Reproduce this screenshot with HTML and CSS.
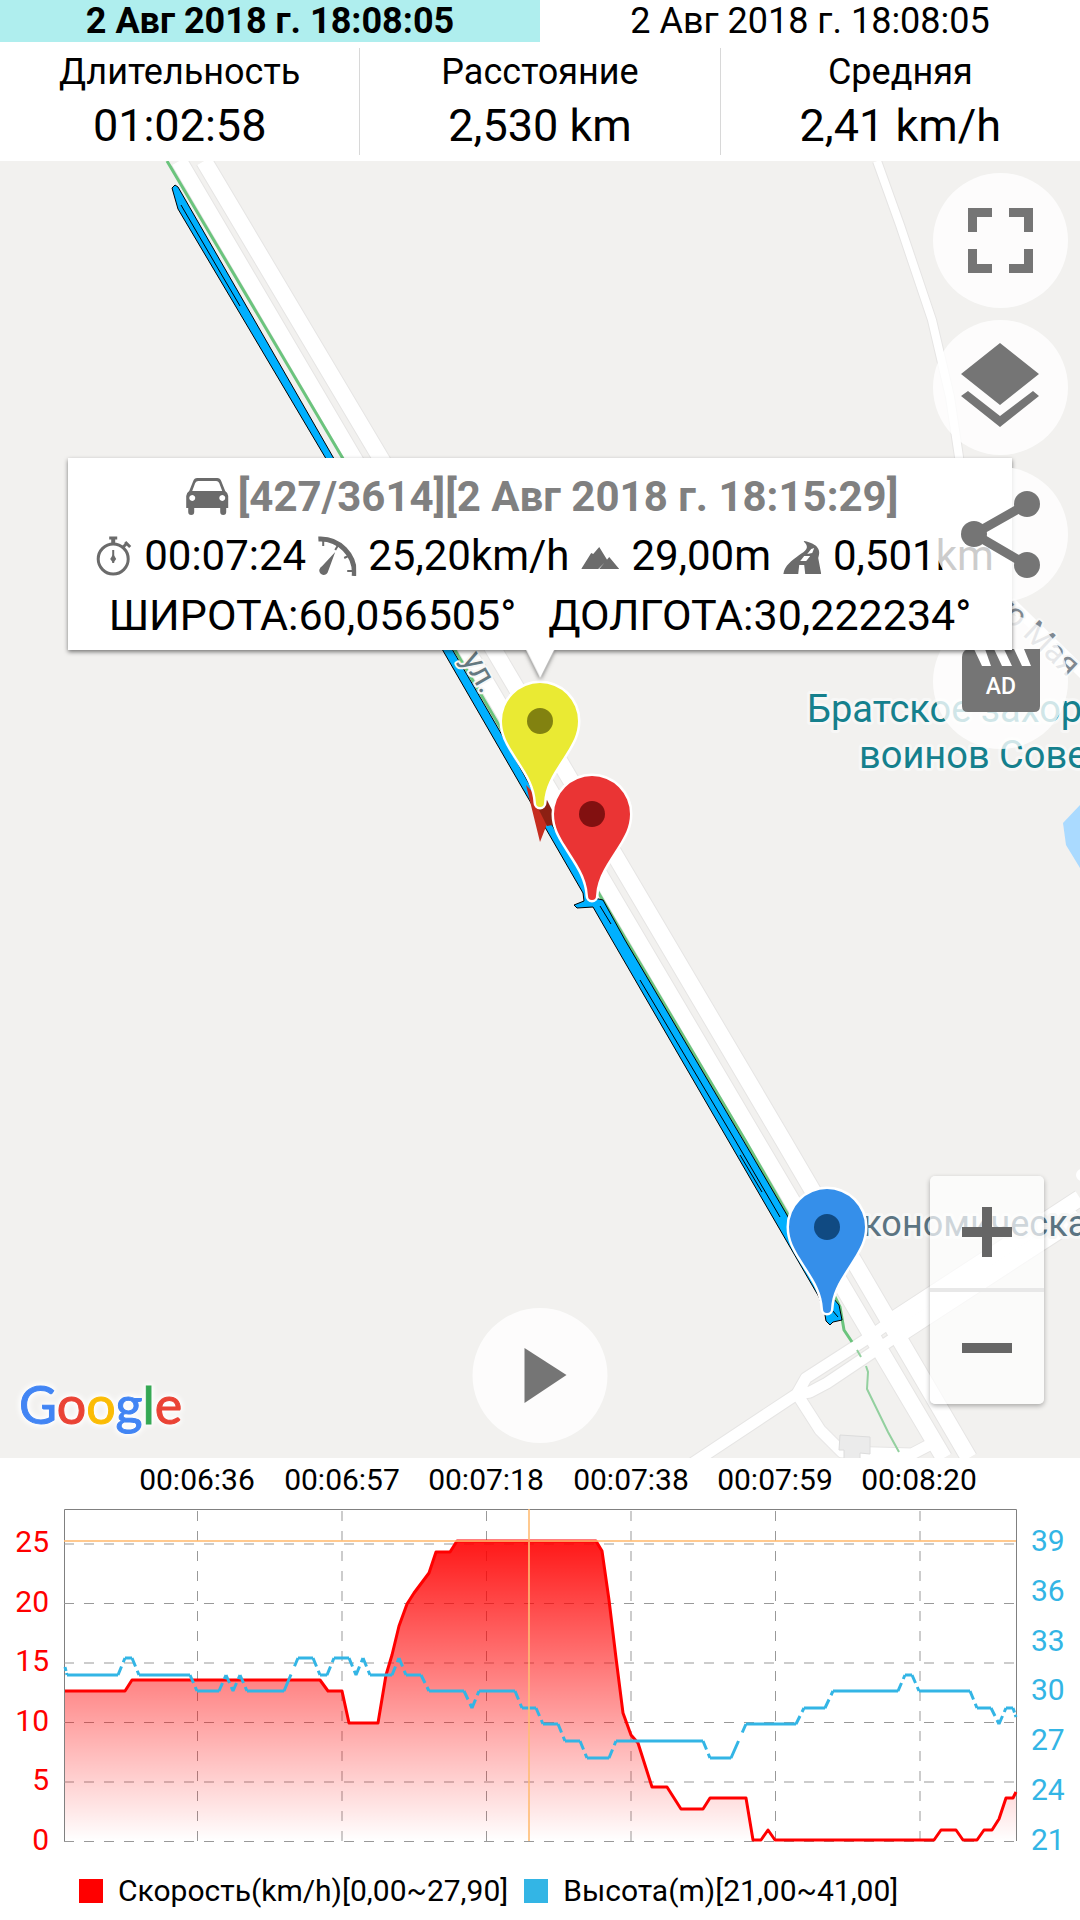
FILE: index.html
```html
<!DOCTYPE html>
<html lang="ru">
<head>
  <meta charset="UTF-8">
  <meta name="viewport" content="width=device-width, initial-scale=1.0">
  <title>Трек</title>
  <link rel="stylesheet" href="styles.css">
</head>
<body>

  <nav class="tabs">
    <button type="button" class="tab active">2 Авг 2018 г. 18:08:05</button>
    <button type="button" class="tab">2 Авг 2018 г. 18:08:05</button>
  </nav>

  <section class="stats">
    <div class="stat">
      <div class="stat-label">Длительность</div>
      <div class="stat-value">01:02:58</div>
    </div>
    <div class="stat">
      <div class="stat-label">Расстояние</div>
      <div class="stat-value">2,530 km</div>
    </div>
    <div class="stat">
      <div class="stat-label">Средняя</div>
      <div class="stat-value">2,41 km/h</div>
    </div>
  </section>

  <main class="map">
    <svg class="map-canvas" viewBox="0 161 1080 1297">
      <defs>
        <path id="pin" d="M0-38a38 38 0 0 1 38 38C38 13 32 23 27 31C16 49 5 62 4 82a4 4 0 0 1-8 0C-5 62-16 49-27 31C-32 23-38 13-38 0a38 38 0 0 1 38-38z"/>
      </defs>

      <!-- roads: grey casing first, then white on top -->
      <g class="road casing">
        <path class="wide" d="M179 161L353 457L756 1140L944 1458"/>
        <path class="wide" d="M204 161L380 457L783 1140L969 1458"/>
        <path class="wide" d="M1080 1198L893 1320"/>
        <path class="wide" d="M1080 1217L903 1332"/>
        <path d="M893 1320L865 1340L806 1378L797 1394L690 1465"/>
        <path d="M903 1332L827 1383L810 1392L797 1394L820 1430L842 1452L912 1454L935 1442"/>
        <path class="thin" d="M877 161L900 225L932 320L950 397L959 457L975 560L1010 602L1090 680"/>
      </g>
      <g class="road">
        <path class="wide" d="M179 161L353 457L756 1140L944 1458"/>
        <path class="wide" d="M204 161L380 457L783 1140L969 1458"/>
        <path class="wide" d="M1080 1198L893 1320"/>
        <path class="wide" d="M1080 1217L903 1332"/>
        <path d="M893 1320L865 1340L806 1378L797 1394L690 1465"/>
        <path d="M903 1332L827 1383L810 1392L797 1394L820 1430L842 1452L912 1454L935 1442"/>
        <path class="thin" d="M877 161L900 225L932 320L950 397L959 457L975 560L1010 602L1090 680"/>
      </g>
      <path class="road" d="M1010 602L1090 680"/>
      <circle cx="1082" cy="1175" r="6" fill="#fff"/>
      <path class="building" d="M840 1435l30 2v17l-10-1v8h-16v-11h-5z"/>
      <path class="water" d="M1063 823L1080 805V868L1066 845z"/>

      <path class="walkway" d="M167 161L342 457L500 727L598 892L625 938L745 1140L787 1213L835 1297L840 1307L844 1330L852 1342"/>
      <path class="walkway light" d="M857 1350L861 1357M866 1366L868 1372L867 1389L888 1432L899 1452"/>

      <path class="track" d="M172 188L175 185L178 187L333 457L452 649L502 735L552 825L585 880L590 897L603 900L625 940L743 1140L787 1215L833 1298L839 1305L842 1320L833 1322L830 1325L826 1321L825 1315L819 1297L728 1140L612 940L593 907L577 908L574 905L584 901L583 893L442 649L325 457L178 209z"/>
      <path class="track-inner" d="M181 205L220 272L240 306M600 906L611 924M640 980L735 1140L780 1217M740 1155L762 1192M832 1310L838 1317"/>

      <g class="map-text">
        <text class="street" transform="translate(482 695) rotate(60)" text-anchor="end">ул.</text>
        <text class="street far" transform="translate(993 608) rotate(43)">го Мая</text>
        <text class="poi" x="807" y="722">Братское захоронение</text>
        <text class="poi" x="859" y="768">воинов Советской</text>
        <text class="district" x="838" y="1236">Экономическая</text>
      </g>

      <path fill="#c62d1f" d="M526 785L540 842L547 824L557 822L548 808z"/>
      <path fill="#8c2013" d="M536 804L547 800L553 812V825L547 826z"/>

      <g transform="translate(540 721)">
        <use href="#pin" class="pin" fill="#eaea33"/>
        <circle r="13" fill="#828210"/>
      </g>
      <g transform="translate(592 814)">
        <use href="#pin" class="pin" fill="#ea3434"/>
        <circle r="13" fill="#821010"/>
      </g>
      <g transform="translate(827 1227)">
        <use href="#pin" class="pin" fill="#358fea"/>
        <circle r="13" fill="#104a82"/>
      </g>
    </svg>

    <div class="popup">
      <div class="popup-row popup-title">
        <svg width="44" height="40" viewBox="0 0 44 40"><path fill="#6b6b6b" fill-rule="evenodd" d="M12 1h20q3 0 4 3l4 10q3 2 3 5v12h-2v4q0 3-3 3t-3-3v-4H9v4q0 3-3 3t-3-3v-4H1V19q0-3 3-5l4-10q1-3 4-3zM13 4q-2 0-3 2L7 14h30l-3-8q-1-2-3-2zM7 18a3 3 0 1 0 .1 0zM37 18a3 3 0 1 0 .1 0z"/></svg>
        <span>[427/3614][2 Авг 2018 г. 18:15:29]</span>
      </div>
      <div class="popup-row popup-metrics">
        <svg width="38" height="40" viewBox="0 0 38 40"><g fill="none" stroke="#6b6b6b"><circle cx="19" cy="23" r="15" stroke-width="3"/><path d="M19 2v6" stroke-width="4"/><path d="M15 2h8" stroke-width="3"/><path d="M29 11l4-4" stroke-width="3"/><path d="M31 6l5 5" stroke-width="3"/><path d="M19 14v13" stroke-width="2"/></g><path fill="#6b6b6b" d="M19 18l3 5-3 4-3-4z"/></svg>
        <span>00:07:24</span>
        <svg width="38" height="40" viewBox="0 0 38 40"><path d="M0 3A34 34 0 0 1 36 40" fill="none" stroke="#6b6b6b" stroke-width="5"/><path d="M5 5v5M20 9l-3 5M32 19l-6 3M37 35h-8" stroke="#6b6b6b" stroke-width="2"/><path fill="#6b6b6b" d="M17 16L10 35q-1 4-5 4-4-1-4-5 1-3 3-4z"/></svg>
        <span>25,20km/h</span>
        <svg width="38" height="40" viewBox="0 0 38 40"><path fill="#6b6b6b" d="M0 33L10 17l2 1 6-7 8 13-9 9zM18 33l10-12 10 12z"/></svg>
        <span>29,00m</span>
        <svg width="38" height="40" viewBox="0 0 38 40"><path fill="#6b6b6b" fill-rule="evenodd" d="M0 38C2 29 8 25 16 19C22 15 27 12 21 6q-1-1 0-1c14 3 17 9 14 17l3 16zM16 29l-1 9h7l-1-9zM21 20l-4 5h6l4-5zM28 13l-4 5 5-1 2-5z"/></svg>
        <span>0,501km</span>
      </div>
      <div class="popup-row popup-coords">
        <span>ШИРОТА:60,056505°</span>
        <span>ДОЛГОТА:30,222234°</span>
      </div>
    </div>

    <div class="side-buttons">
      <button type="button" class="round-btn" aria-label="Во весь экран">
        <svg viewBox="0 0 135 135"><path d="M35 35h24v9H44v15h-9zM76 35h24v24h-9V44H76zM35 76h9v15h15v9H35zM91 76h9v24H76v-9h15z"/></svg>
      </button>
      <button type="button" class="round-btn" aria-label="Слои">
        <svg viewBox="0 0 135 135"><path d="M67 23L106 54L67 85L28 54zM35 71L67 96L100 71L106 76L67 107L28 76z"/></svg>
      </button>
      <button type="button" class="round-btn" aria-label="Поделиться">
        <svg viewBox="0 0 135 135"><path d="M94 37L41 67L94 98" fill="none" stroke="#757575" stroke-width="9"/><circle cx="94" cy="37" r="13"/><circle cx="41" cy="67" r="13"/><circle cx="94" cy="98" r="13"/></svg>
      </button>
      <button type="button" class="round-btn behind" aria-label="Реклама">
        <svg viewBox="0 0 135 135"><path d="M37 35H107V92q0 6-6 6H35q-6 0-6-6V43q0-6 6-8z"/><path class="slats" d="M41 35h11l6 17h-9zM61 35h10l8 17h-10zM81 35h10l7 17h-9z"/><text x="68" y="80" text-anchor="middle">AD</text></svg>
      </button>
    </div>

    <div class="zoom">
      <button type="button" aria-label="Увеличить"><svg width="50" height="50" viewBox="0 0 50 50"><path d="M20 0h10v20h20v10H30v20H20V30H0V20h20z"/></svg></button>
      <button type="button" aria-label="Уменьшить"><svg width="50" height="50" viewBox="0 0 50 50"><path d="M0 20h50v10H0z"/></svg></button>
    </div>

    <button type="button" class="round-btn play" aria-label="Воспроизвести">
      <svg viewBox="0 0 135 135"><path d="M52 40L94 67L52 95z"/></svg>
    </button>

    <a class="google" href="#" aria-label="Google"><span class="b">G</span><span class="r">o</span><span class="y">o</span><span class="b">g</span><span class="g">l</span><span class="r">e</span></a>
  </main>

  <section class="chart">
    <svg class="chart-canvas" viewBox="0 1458 1080 404">
      <defs>
        <linearGradient id="speedFill" gradientUnits="userSpaceOnUse" x1="0" y1="1510" x2="0" y2="1841">
          <stop offset="0" stop-color="#f00"/>
          <stop offset="1" stop-color="#f00" stop-opacity="0"/>
        </linearGradient>
      </defs>

      <path class="frame" d="M64.5 1841V1509.5H1016.5V1841"/>
      <g id="grid" class="grid"></g>
      <path id="speed-area" fill="url(#speedFill)"/>
      <path id="speed-line" class="speed"/>
      <path id="alt-line" class="altitude"/>
      <path class="cursor" d="M64 1541H1016M529 1509V1841"/>

      <g class="axis time">
        <text x="197" y="1490">00:06:36</text>
        <text x="342" y="1490">00:06:57</text>
        <text x="486" y="1490">00:07:18</text>
        <text x="631" y="1490">00:07:38</text>
        <text x="775" y="1490">00:07:59</text>
        <text x="919" y="1490">00:08:20</text>
      </g>
      <g class="axis left">
        <text x="49" y="1552">25</text>
        <text x="49" y="1612">20</text>
        <text x="49" y="1671">15</text>
        <text x="49" y="1731">10</text>
        <text x="49" y="1790">5</text>
        <text x="49" y="1850">0</text>
      </g>
      <g class="axis right">
        <text x="1031" y="1551">39</text>
        <text x="1031" y="1601">36</text>
        <text x="1031" y="1651">33</text>
        <text x="1031" y="1700">30</text>
        <text x="1031" y="1750">27</text>
        <text x="1031" y="1800">24</text>
        <text x="1031" y="1850">21</text>
      </g>
    </svg>
    <div class="legend">
      <span class="legend-item"><i class="swatch red"></i>Скорость(km/h)[0,00~27,90]</span>
      <span class="legend-item"><i class="swatch blue"></i>Высота(m)[21,00~41,00]</span>
    </div>
  </section>

  <script>
    const speed = [
      [65,1691],[125,1691],[132,1680],[320,1680],[328,1691],[342,1691],[349,1723],[378,1723],
      [386,1675],[392,1655],[399,1626],[407,1604],[414,1593],[429,1573],[436,1552],[450,1552],
      [457,1541],[596,1541],[602,1551],[609,1600],[616,1658],[623,1713],[631,1735],[638,1743],
      [652,1787],[667,1787],[681,1809],[703,1809],[710,1798],[746,1798],[753,1840],[761,1840],
      [768,1830],[775,1840],[934,1840],[941,1830],[956,1830],[963,1840],[977,1840],[984,1830],
      [992,1830],[999,1819],[1006,1798],[1013,1798],[1016,1792]
    ];
    const altitude = [
      [65,1667],[67,1675],[118,1675],[125,1658],[132,1658],[139,1675],[190,1675],[197,1691],
      [219,1691],[226,1675],[233,1691],[240,1675],[247,1691],[284,1691],[298,1658],[313,1658],
      [320,1675],[327,1675],[334,1658],[349,1658],[356,1675],[363,1658],[370,1675],[392,1675],
      [399,1658],[406,1675],[421,1675],[429,1691],[464,1691],[472,1708],[479,1691],[515,1691],
      [522,1708],[536,1708],[543,1724],[558,1724],[565,1741],[580,1741],[587,1758],[609,1758],
      [616,1741],[703,1741],[710,1758],[731,1758],[746,1724],[796,1724],[804,1708],[825,1708],
      [833,1691],[898,1691],[905,1675],[912,1675],[919,1691],[970,1691],[977,1708],[991,1708],
      [999,1724],[1006,1708],[1013,1708],[1016,1717]
    ];

    const line = 'M' + speed.map(p => p.join(' ')).join('L');
    document.getElementById('speed-line').setAttribute('d', line);
    document.getElementById('speed-area').setAttribute('d', line + 'V1841H65z');

    // flat parts are solid, slopes are split in two dashes
    let alt = '';
    for (let i = 1; i < altitude.length; i++) {
      const [x1, y1] = altitude[i - 1];
      const [x2, y2] = altitude[i];
      if (y1 === y2) {
        alt += `M${x1} ${y1}H${x2}`;
      } else {
        const at = t => `${x1 + (x2 - x1) * t} ${y1 + (y2 - y1) * t}`;
        alt += `M${at(0)}L${at(0.5)}M${at(0.75)}L${at(1)}`;
      }
    }
    document.getElementById('alt-line').setAttribute('d', alt);

    const grid = document.getElementById('grid');
    const addLine = d => {
      const path = document.createElementNS('http://www.w3.org/2000/svg', 'path');
      path.setAttribute('d', d);
      grid.appendChild(path);
    };
    [197.5, 342, 486.5, 631, 775.5, 920].forEach(x => addLine(`M${x} 1841V1510`));
    [1544, 1603.5, 1663, 1722.5, 1782, 1841.5].forEach(y => addLine(`M64 ${y}H1016`));
  </script>

</body>
</html>
```

FILE: styles.css
```css
* {
  box-sizing: border-box;
}

body {
  margin: 0;
  background: #fff;
  color: #000;
  font-family: Roboto, sans-serif;
}

button {
  margin: 0;
  padding: 0;
  border: none;
  background: none;
  font-family: inherit;
  color: inherit;
  cursor: pointer;
}

/* header */
.tabs {
  display: flex;
}

.tab {
  flex: 1;
  height: 42px;
  font-size: 36px;
  line-height: 42px;
}

.tab.active {
  background: #afeeee;
  font-weight: bold;
}

.stats {
  display: flex;
  padding: 6px 0;
}

.stat {
  flex: 1;
  text-align: center;
  border-left: 1px solid #d8d8d8;
}

.stat:first-child {
  border-left: none;
}

.stat-label {
  font-size: 36px;
  line-height: 48px;
}

.stat-value {
  font-size: 45px;
  line-height: 59px;
}

/* map */
.map {
  position: relative;
  overflow: hidden;
  background: #f2f1ef;
}

.map-canvas,
.chart-canvas {
  display: block;
  width: 100%;
  height: auto;
}

.road {
  fill: none;
  stroke: #fff;
  stroke-width: 11px;
  stroke-linejoin: round;
}

.road .wide {
  stroke-width: 16px;
}

.road .thin {
  stroke-width: 8px;
}

.casing {
  stroke: #e6e5e4;
  stroke-width: 13px;
}

.casing .wide {
  stroke-width: 18px;
}

.casing .thin {
  stroke-width: 10px;
}

.building {
  fill: #ebebeb;
  stroke: #dcdcdc;
}

.water {
  fill: #aadaff;
}

.walkway {
  fill: none;
  stroke: #6bc47d;
  stroke-width: 3px;
}

.walkway.light {
  stroke: #93d09f;
  stroke-width: 2px;
}

.track {
  fill: #00b0ff;
  stroke: #000;
}

.track-inner {
  fill: none;
  stroke: #000;
}

.map-text {
  font-size: 38px;
  paint-order: stroke;
  stroke: #f7f7f6;
  stroke-width: 6px;
  stroke-linejoin: round;
}

.street {
  font-size: 32px;
  fill: #647880;
  stroke-width: 4px;
}

.street.far {
  fill: #808890;
}

.poi {
  fill: #15808d;
}

.district {
  font-size: 36px;
  fill: #5b7482;
}

.pin {
  stroke: #fff;
  stroke-width: 5px;
  paint-order: stroke;
}

.popup {
  position: absolute;
  z-index: 2;
  top: 297px;
  left: 50%;
  transform: translateX(-50%);
  width: max-content;
  padding: 9px 18px 6px;
  background: #fff;
  font-size: 42px;
  filter: drop-shadow(0 2px 2px rgba(0, 0, 0, 0.5));
}

.popup::after {
  content: "";
  position: absolute;
  top: 100%;
  left: 50%;
  margin-left: -14px;
  border: 14px solid transparent;
  border-top: 28px solid #fff;
  border-bottom: none;
}

.popup-row {
  display: flex;
  align-items: center;
  justify-content: center;
  gap: 12px;
  height: 59px;
  white-space: nowrap;
}

.popup-title {
  gap: 8px;
  padding-left: 4px;
  color: #808080;
  font-weight: bold;
}

.popup-metrics {
  padding-left: 8px;
}

.popup-coords {
  gap: 32px;
  font-size: 43px;
}

.side-buttons {
  position: absolute;
  top: 12px;
  right: 12px;
  display: flex;
  flex-direction: column;
  gap: 12px;
}

.round-btn {
  width: 135px;
  height: 135px;
  border-radius: 50%;
  background: rgba(255, 255, 255, 0.8);
  z-index: 3;
}

.round-btn.behind {
  z-index: 1;
}

.round-btn svg {
  display: block;
  fill: #757575;
}

.round-btn .slats,
.round-btn text {
  fill: #fff;
}

.round-btn text {
  font-size: 23px;
  font-weight: 500;
}

.play {
  position: absolute;
  bottom: 15px;
  left: 50%;
  transform: translateX(-50%);
}

.zoom {
  position: absolute;
  right: 36px;
  bottom: 54px;
  width: 114px;
  border-radius: 5px;
  background: rgba(255, 255, 255, 0.7);
  box-shadow: 0 2px 5px rgba(0, 0, 0, 0.3);
}

.zoom button {
  display: flex;
  align-items: center;
  justify-content: center;
  box-sizing: content-box;
  width: 100%;
  height: 112px;
}

.zoom button + button {
  border-top: 4px solid #e8e8e8;
}

.zoom svg {
  fill: #666;
}

.google {
  position: absolute;
  left: 19px;
  bottom: 22px;
  font-family: Lato, sans-serif;
  font-size: 52px;
  line-height: 64px;
  text-decoration: none;
  -webkit-text-stroke: 1px;
  filter: drop-shadow(0 0 3px #fff) drop-shadow(0 0 2px #fff);
}

.google .b { color: #4285f4; }
.google .r { color: #ea4335; }
.google .y { color: #fbbc05; }
.google .g { color: #34a853; }

/* chart */
.frame {
  fill: none;
  stroke: #808080;
}

.grid {
  stroke: #999;
  stroke-dasharray: 10 10;
}

.speed,
.altitude {
  fill: none;
  stroke: #f00;
  stroke-width: 3px;
  stroke-linejoin: round;
}

.altitude {
  stroke: #33b5e5;
}

.cursor {
  stroke: #ffbb73;
  stroke-opacity: 0.8;
  stroke-width: 2px;
}

.axis {
  font-size: 30px;
}

.axis.time {
  text-anchor: middle;
}

.axis.left {
  text-anchor: end;
  fill: #f00;
}

.axis.right {
  fill: #33b5e5;
}

.legend {
  display: flex;
  gap: 16px;
  height: 58px;
  padding: 8px 79px;
  font-size: 30px;
  line-height: 40px;
}

.legend-item {
  display: flex;
  align-items: center;
  gap: 15px;
  white-space: nowrap;
}

.swatch {
  width: 24px;
  height: 24px;
}

.swatch.red {
  background: #f00;
}

.swatch.blue {
  background: #33b5e5;
}
```
